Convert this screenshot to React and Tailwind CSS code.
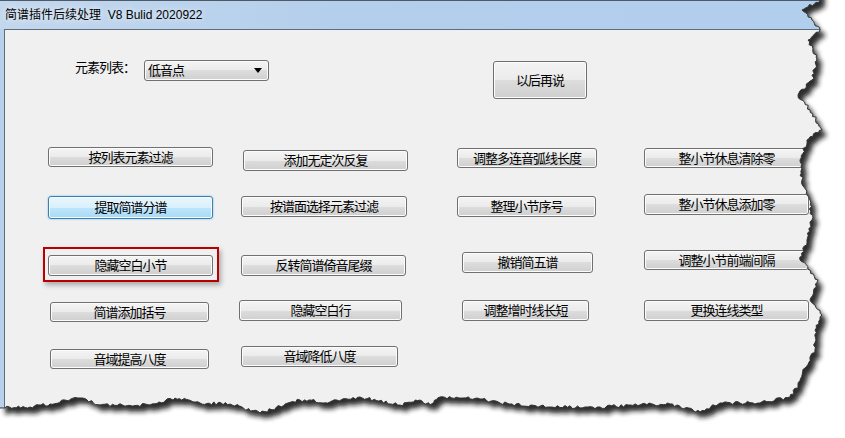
import React from 'react';
import clsx from 'clsx';

// Win7 classic push button
const Btn = ({ children, className, focused }) => (
  <button
    className={clsx(
      'flex shrink-0 items-center justify-center rounded-[3px] border text-[13px] leading-none tracking-[-1px] text-black',
      focused
        ? 'border-[#3c7fb1] bg-[linear-gradient(to_bottom,#eaf6fd_0%,#d9f0fc_50%,#bee6fd_50%,#a7d9f5_100%)] shadow-[inset_0_0_0_1px_#f4fbff,0_0_2px_#66b7ef]'
        : 'border-[#707070] bg-[linear-gradient(to_bottom,#f4f4f4_0%,#ebebeb_50%,#dddddd_50%,#cfcfcf_100%)] shadow-[inset_0_0_0_1px_#fcfcfc]',
      className
    )}
  >
    {children}
  </button>
);

// torn edge anchors, right side then bottom
const RIGHT = [
  [820, 0], [802, 10], [812, 20], [820, 30], [808, 40], [817, 60], [812, 80], [798, 95],
  [810, 110], [822, 130], [807, 140], [800, 160], [802, 180], [810, 200], [812, 220],
  [807, 240], [800, 260], [818, 280], [810, 300], [822, 315], [815, 330], [815, 350],
  [805, 368], [798, 385], [790, 397],
];
const BOTTOM = [
  [760, 403], [720, 403], [700, 412], [670, 404], [640, 405], [600, 407], [550, 407],
  [500, 403], [480, 399], [440, 397], [430, 405], [420, 400], [400, 405], [360, 397],
  [330, 402], [300, 400], [260, 413], [230, 404], [200, 403], [175, 398], [150, 405],
  [100, 405], [80, 398], [50, 404], [30, 407], [0, 408],
];

const buildEdge = () => {
  let seed = 11;
  const rnd = () => {
    seed = (seed * 16807) % 2147483647;
    return seed / 2147483647;
  };
  const anchors = [...RIGHT, ...BOTTOM];
  const pts = [];
  for (let i = 0; i < anchors.length - 1; i++) {
    const [ax, ay] = anchors[i];
    const [bx, by] = anchors[i + 1];
    const dx = bx - ax;
    const dy = by - ay;
    const len = Math.hypot(dx, dy) || 1;
    const steps = Math.max(1, Math.ceil(len / 2.5));
    for (let s = 0; s < steps; s++) {
      const t = s / steps;
      const j = s === 0 ? 0 : (rnd() - 0.5) * 3.2;
      pts.push([ax + dx * t + (-dy / len) * j, ay + dy * t + (dx / len) * j]);
    }
  }
  pts.push(anchors[anchors.length - 1]);
  return pts.map(([x, y]) => `${x.toFixed(1)},${y.toFixed(1)}`).join(' L');
};

const TornEdge = () => {
  const edge = buildEdge();
  const poly = `M0,-20 L820,-20 L${edge} L0,-20 Z`;
  const outside = `M-30,-30 H900 V500 H-30 Z ${poly}`;
  return (
    <svg className="pointer-events-none absolute inset-0" width="845" height="438">
      <defs>
        <filter id="tear-blur" x="-10%" y="-10%" width="120%" height="120%">
          <feGaussianBlur stdDeviation="2.6" />
        </filter>
        <clipPath id="tear-outside">
          <path d={outside} clipRule="evenodd" />
        </clipPath>
      </defs>
      <path d={outside} fill="#fff" fillRule="evenodd" />
      <g clipPath="url(#tear-outside)">
        <path d={poly} transform="translate(5,6)" fill="#141414" opacity="0.9" filter="url(#tear-blur)" />
      </g>
      <path d={`M${edge}`} fill="none" stroke="#333" strokeWidth="1" />
    </svg>
  );
};

export default function App() {
  return (
    <div className="relative h-[438px] w-[845px] overflow-hidden bg-white font-['Liberation_Sans','Noto_Sans_CJK_SC',sans-serif]">
      <div className="flex h-full flex-col border-t border-[#4d5b69] bg-[#b9d1ea]">
        {/* title bar */}
        <div className="flex h-[28px] shrink-0 items-center bg-[linear-gradient(to_right,#c3d7ed,#b4cfec_40%,#b2ceed)] pl-[5px] text-[12px] text-black [text-shadow:0_0_6px_#ffffff]">
          <span>简谱插件后续处理&nbsp;&nbsp;V8 Bulid 2020922</span>
        </div>

        {/* client area */}
        <div className="ml-[4px] flex flex-1 flex-col border-l border-t border-[#5d6d7e] bg-[#f0f0f0] text-[13px] tracking-[-1px] text-black">
          {/* top row */}
          <div className="flex h-[117px] shrink-0 items-start">
            <span className="ml-[70px] mt-[31px] leading-[14px]">元素列表：</span>
            <div className="ml-[9px] mt-[30px] flex h-[21px] w-[125px] items-center justify-between rounded-[3px] border border-[#707070] bg-[linear-gradient(to_bottom,#f4f4f4_0%,#ebebeb_50%,#dddddd_50%,#cfcfcf_100%)] pl-[3px] pr-[6px] shadow-[inset_0_0_0_1px_#fcfcfc]">
              <span>低音点</span>
              <svg width="8" height="5" viewBox="0 0 8 5">
                <path d="M0 0 H8 L4 5 Z" fill="#000" />
              </svg>
            </div>
            <Btn className="ml-[224px] mt-[31px] h-[38px] w-[94px]">以后再说</Btn>
          </div>

          {/* row 1 */}
          <div className="flex h-[47px] shrink-0 items-start">
            <Btn className="ml-[43px] h-[20px] w-[165px]">按列表元素过滤</Btn>
            <Btn className="ml-[30px] mt-[3px] h-[21px] w-[165px]">添加无定次反复</Btn>
            <Btn className="ml-[49px] mt-[1px] h-[20px] w-[140px]">调整多连音弧线长度</Btn>
            <Btn className="ml-[47px] mt-[1px] h-[20px] w-[165px]">整小节休息清除零</Btn>
          </div>

          {/* row 2 */}
          <div className="flex h-[53px] shrink-0 items-start">
            <Btn focused className="ml-[43px] mt-[2px] h-[23px] w-[165px]">提取简谱分谱</Btn>
            <Btn className="ml-[28px] mt-[2px] h-[21px] w-[166px]">按谱面选择元素过滤</Btn>
            <Btn className="ml-[50px] mt-[2px] h-[21px] w-[139px]">整理小节序号</Btn>
            <Btn className="ml-[48px] h-[21px] w-[165px]">整小节休息添加零</Btn>
          </div>

          {/* row 3 */}
          <div className="flex h-[53px] shrink-0 items-start">
            <div className="ml-[38px] h-[35px] w-[176px] shrink-0 border-2 border-[#b80000] pl-[3px] pt-[6px] shadow-[2px_3px_5px_rgba(0,0,0,0.3)]">
              <Btn className="h-[21px] w-[165px]">隐藏空白小节</Btn>
            </div>
            <Btn className="ml-[22px] mt-[8px] h-[21px] w-[165px]">反转简谱倚音尾缀</Btn>
            <Btn className="ml-[56px] mt-[5px] h-[21px] w-[131px]">撤销简五谱</Btn>
            <Btn className="ml-[51px] mt-[3px] h-[20px] w-[165px]">调整小节前端间隔</Btn>
          </div>

          {/* row 4 */}
          <div className="flex h-[46px] shrink-0 items-start">
            <Btn className="ml-[45px] mt-[2px] h-[20px] w-[159px]">简谱添加括号</Btn>
            <Btn className="ml-[30px] h-[21px] w-[163px]">隐藏空白行</Btn>
            <Btn className="ml-[60px] h-[21px] w-[127px]">调整增时线长短</Btn>
            <Btn className="ml-[55px] h-[21px] w-[165px]">更换连线类型</Btn>
          </div>

          {/* row 5 */}
          <div className="flex shrink-0 items-start">
            <Btn className="ml-[45px] mt-[3px] h-[20px] w-[159px]">音域提高八度</Btn>
            <Btn className="ml-[32px] h-[21px] w-[157px]">音域降低八度</Btn>
          </div>
        </div>
      </div>
      <TornEdge />
    </div>
  );
}
